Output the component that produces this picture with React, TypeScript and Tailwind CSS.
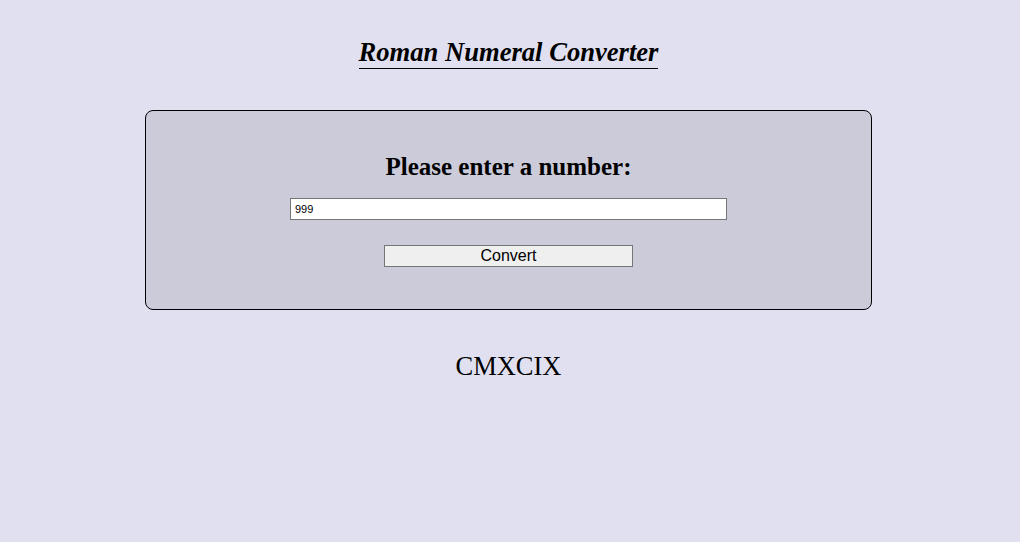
import { useState } from 'react';

const toRoman = (n: number) => {
  const map: [number, string][] = [
    [1000, 'M'], [900, 'CM'], [500, 'D'], [400, 'CD'], [100, 'C'], [90, 'XC'],
    [50, 'L'], [40, 'XL'], [10, 'X'], [9, 'IX'], [5, 'V'], [4, 'IV'], [1, 'I'],
  ];
  let out = '';
  for (const [v, s] of map) {
    while (n >= v) { out += s; n -= v; }
  }
  return out;
};

export default function App() {
  const [value, setValue] = useState('999');
  const [result, setResult] = useState('CMXCIX');

  return (
    <div className="min-h-[542px] bg-[#e1e0f0] pr-[3px] font-['Liberation_Serif',serif] text-black">
      {/* Title */}
      <div className="flex justify-center pt-[37px]">
        <h1 className="inline-block border-b border-black text-[26.6px] font-bold italic leading-[31px]">
          Roman Numeral Converter
        </h1>
      </div>

      {/* Form card */}
      <div className="mx-auto mt-[41px] flex h-[200px] w-[727px] flex-col items-center rounded-lg border border-black bg-[#cccbd9] pt-[40px]">
        <h2 className="text-[25px] font-bold leading-[32px]">Please enter a number:</h2>
        <input
          type="text"
          value={value}
          onChange={(e) => setValue(e.target.value)}
          className="mt-[15px] h-[22px] w-[437px] border border-[#767676] bg-white px-[4px] font-['Liberation_Sans',sans-serif] text-[11px] outline-none"
        />
        <button
          type="button"
          onClick={() => setResult(toRoman(parseInt(value, 10) || 0))}
          className="mt-[25px] h-[22px] w-[249px] border border-[#767676] bg-[#efefef] font-['Liberation_Sans',sans-serif] text-[16px] leading-[18px]"
        >
          Convert
        </button>
      </div>

      {/* Output */}
      <p className="mt-[41px] text-center text-[26.5px] leading-[30px]">{result}</p>
    </div>
  );
}
